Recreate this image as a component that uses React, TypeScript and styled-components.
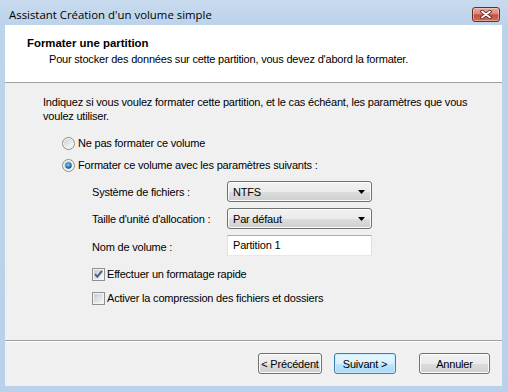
import { useId } from "react";
import styled, { createGlobalStyle } from "styled-components";

const GlobalStyle = createGlobalStyle`
  html, body {
    margin: 0;
    padding: 0;
  }
  body {
    width: 508px;
    height: 392px;
    overflow: hidden;
    font-family: "Liberation Sans", Arial, sans-serif;
    font-size: 11px;
    letter-spacing: -0.2px;
    color: #000;
  }
`;

function Radio({ checked }: { checked?: boolean }) {
  const id = useId();
  return (
    <svg width="13" height="13" viewBox="0 0 13 13">
      <defs>
        <linearGradient id={id + "b"} x1="0" y1="0" x2="1" y2="1">
          <stop offset="0" stopColor="#cfd1d3" />
          <stop offset="1" stopColor="#fbfbfb" />
        </linearGradient>
        <radialGradient id={id + "d"} cx="0.45" cy="0.4" r="0.6">
          <stop offset="0" stopColor="#8fd0f5" />
          <stop offset="0.6" stopColor="#2b7fc0" />
          <stop offset="1" stopColor="#0c4a80" />
        </radialGradient>
      </defs>
      <circle cx="6.5" cy="6.5" r="6" fill="#f6f6f6" stroke="#8b8c8d" />
      <circle cx="6.5" cy="6.5" r="4.6" fill={`url(#${id}b)`} />
      {checked && <circle cx="6.5" cy="6.5" r="3.2" fill={`url(#${id}d)`} />}
    </svg>
  );
}

function Check({ checked }: { checked?: boolean }) {
  const id = useId();
  return (
    <svg width="13" height="13" viewBox="0 0 13 13">
      <defs>
        <linearGradient id={id} x1="0" y1="0" x2="1" y2="1">
          <stop offset="0" stopColor="#c6cbd2" />
          <stop offset="1" stopColor="#f7f7f7" />
        </linearGradient>
      </defs>
      <rect x="0.5" y="0.5" width="12" height="12" fill="#f4f4f4" stroke="#8e8f8f" />
      <rect x="2" y="2" width="9" height="9" fill={`url(#${id})`} />
      {checked && (
        <path d="M3 6.2 L5.3 8.7 L10 2.8" fill="none" stroke="#4a5f8c" strokeWidth="1.9" />
      )}
    </svg>
  );
}

function Arrow() {
  return (
    <svg width="7" height="4" viewBox="0 0 7 4">
      <polygon points="0,0 7,0 3.5,4" fill="#000" />
    </svg>
  );
}

function CloseGlyph() {
  return (
    <svg width="12" height="9" viewBox="0 0 12 9">
      <path d="M2 1.5 L10 7.5 M10 1.5 L2 7.5" stroke="#4a1c18" strokeWidth="3.4" strokeLinecap="round" />
      <path d="M2 1.5 L10 7.5 M10 1.5 L2 7.5" stroke="#fff" strokeWidth="1.8" strokeLinecap="round" />
    </svg>
  );
}

export default function App() {
  return (
    <>
      <GlobalStyle />
      <Window>
        <TitleBar>
          <Title>Assistant Création d'un volume simple</Title>
          <CloseButton>
            <CloseGlyph />
          </CloseButton>
        </TitleBar>
        <Client>
          <Header>
            <HeaderTitle>Formater une partition</HeaderTitle>
            <HeaderSub>
              Pour stocker des données sur cette partition, vous devez d'abord la formater.
            </HeaderSub>
          </Header>
          <Body>
            <Intro>
              Indiquez si vous voulez formater cette partition, et le cas échéant, les paramètres que vous
              <br />
              voulez utiliser.
            </Intro>
            <Options>
              <OptionRow>
                <Radio />
                <span>Ne pas formater ce volume</span>
              </OptionRow>
              <OptionRow>
                <Radio checked />
                <span>Formater ce volume avec les paramètres suivants :</span>
              </OptionRow>
            </Options>
            <Settings>
              <FieldLabel>Système de fichiers :</FieldLabel>
              <Combo>
                <span>NTFS</span>
                <Arrow />
              </Combo>
              <FieldLabel>Taille d'unité d'allocation :</FieldLabel>
              <Combo>
                <span>Par défaut</span>
                <Arrow />
              </Combo>
              <FieldLabel $shift={2}>Nom de volume :</FieldLabel>
              <TextBox>Partition 1</TextBox>
            </Settings>
            <Checks>
              <CheckRow>
                <Check checked />
                <span>Effectuer un formatage rapide</span>
              </CheckRow>
              <CheckRow>
                <Check />
                <span>Activer la compression des fichiers et dossiers</span>
              </CheckRow>
            </Checks>
          </Body>
          <Footer>
            <Button $width={64}>&lt; Précédent</Button>
            <Button $width={62} $gap={4} $default>
              Suivant &gt;
            </Button>
            <Button $width={71} $gap={15}>
              Annuler
            </Button>
          </Footer>
        </Client>
      </Window>
    </>
  );
}

const Window = styled.div`
  width: 508px;
  height: 392px;
  box-sizing: border-box;
  display: flex;
  flex-direction: column;
  padding: 0 6px 6px 5px;
  background: linear-gradient(#c8daee, #bcd3eb 25px, #b9d1ea);
`;

const TitleBar = styled.div`
  height: 25px;
  display: flex;
  justify-content: space-between;
  padding-left: 4px;
`;

const Title = styled.span`
  font-family: "Open Sans", "Noto Sans", sans-serif;
  font-size: 11.4px;
  letter-spacing: 0;
  line-height: 30px;
  color: #000;
`;

const CloseButton = styled.div`
  width: 26px;
  height: 13px;
  margin: 7px 2px 0 0;
  display: flex;
  align-items: center;
  justify-content: center;
  border: 1px solid #6b2d28;
  border-radius: 3px;
  background: linear-gradient(#e8a99e 0%, #d9897b 45%, #c4503f 52%, #d06a56 100%);
  box-shadow: inset 0 0 0 1px rgba(255, 220, 210, 0.5);
`;

const Client = styled.div`
  flex: 1;
  display: flex;
  flex-direction: column;
  background: #f0f0f0;
`;

const Header = styled.div`
  height: 58px;
  box-sizing: border-box;
  padding: 11px 0 0 22px;
  background: #fff;
  border-bottom: 1px solid #a0a0a0;
`;

const HeaderTitle = styled.div`
  font-weight: bold;
  font-size: 11.4px;
  letter-spacing: 0;
  line-height: 14px;
`;

const HeaderSub = styled.div`
  margin: 2px 0 0 22px;
  line-height: 14px;
`;

const Body = styled.div`
  flex: 1;
  padding: 12px 0 0 38px;
`;

const Intro = styled.p`
  margin: 0;
  line-height: 14px;
`;

const Options = styled.div`
  margin: 12px 0 0 19px;
  display: flex;
  flex-direction: column;
  gap: 6px;
`;

const OptionRow = styled.div`
  height: 16px;
  display: flex;
  align-items: center;
  gap: 3px;
`;

const Settings = styled.div`
  margin: 8px 0 0 49px;
  display: grid;
  grid-template-columns: 135px 145px;
  grid-auto-rows: 21px;
  row-gap: 6px;
  align-items: center;
`;

const FieldLabel = styled.span<{ $shift?: number }>`
  padding-top: ${(p) => p.$shift ?? 1}px;
`;

const Combo = styled.div`
  height: 21px;
  box-sizing: border-box;
  display: flex;
  align-items: center;
  justify-content: space-between;
  padding: 0 6px 0 5px;
  border: 1px solid #707070;
  border-radius: 3px;
  background: linear-gradient(#f2f2f2 0%, #ebebeb 50%, #dddddd 51%, #cfcfcf 100%);
  box-shadow: inset 0 0 0 1px #fcfcfc;
`;

const TextBox = styled.div`
  height: 21px;
  box-sizing: border-box;
  padding: 3px 0 0 5px;
  background: #fff;
  border: 1px solid #e3e9ef;
  border-top-color: #abadb3;
  border-left-color: #e2e3ea;
  border-right-color: #dbdfe6;
`;

const Checks = styled.div`
  margin: 10px 0 0 49px;
  display: flex;
  flex-direction: column;
  gap: 8px;
`;

const CheckRow = styled.div`
  height: 16px;
  display: flex;
  align-items: center;
  gap: 2px;
`;

const Footer = styled.div`
  height: 46px;
  box-sizing: border-box;
  display: flex;
  align-items: center;
  justify-content: flex-end;
  gap: 8px;
  padding-right: 12px;
  border-top: 1px solid #a0a0a0;
  box-shadow: inset 0 1px #fff;
`;

const Button = styled.div<{ $width: number; $default?: boolean; $gap?: number }>`
  width: ${(p) => p.$width}px;
  height: 21px;
  box-sizing: border-box;
  margin-left: ${(p) => p.$gap ?? 0}px;
  display: flex;
  align-items: center;
  justify-content: center;
  border-radius: 3px;
  border: 1px solid ${(p) => (p.$default ? "#3c7fb1" : "#707070")};
  background: ${(p) =>
    p.$default
      ? "linear-gradient(#eaf6fd 0%, #d9f0fc 50%, #bee6fd 51%, #a7d9f5 100%)"
      : "linear-gradient(#f2f2f2 0%, #ebebeb 50%, #dddddd 51%, #cfcfcf 100%)"};
  box-shadow: inset 0 0 0 1px ${(p) => (p.$default ? "#c6eaff" : "#fcfcfc")};
`;
